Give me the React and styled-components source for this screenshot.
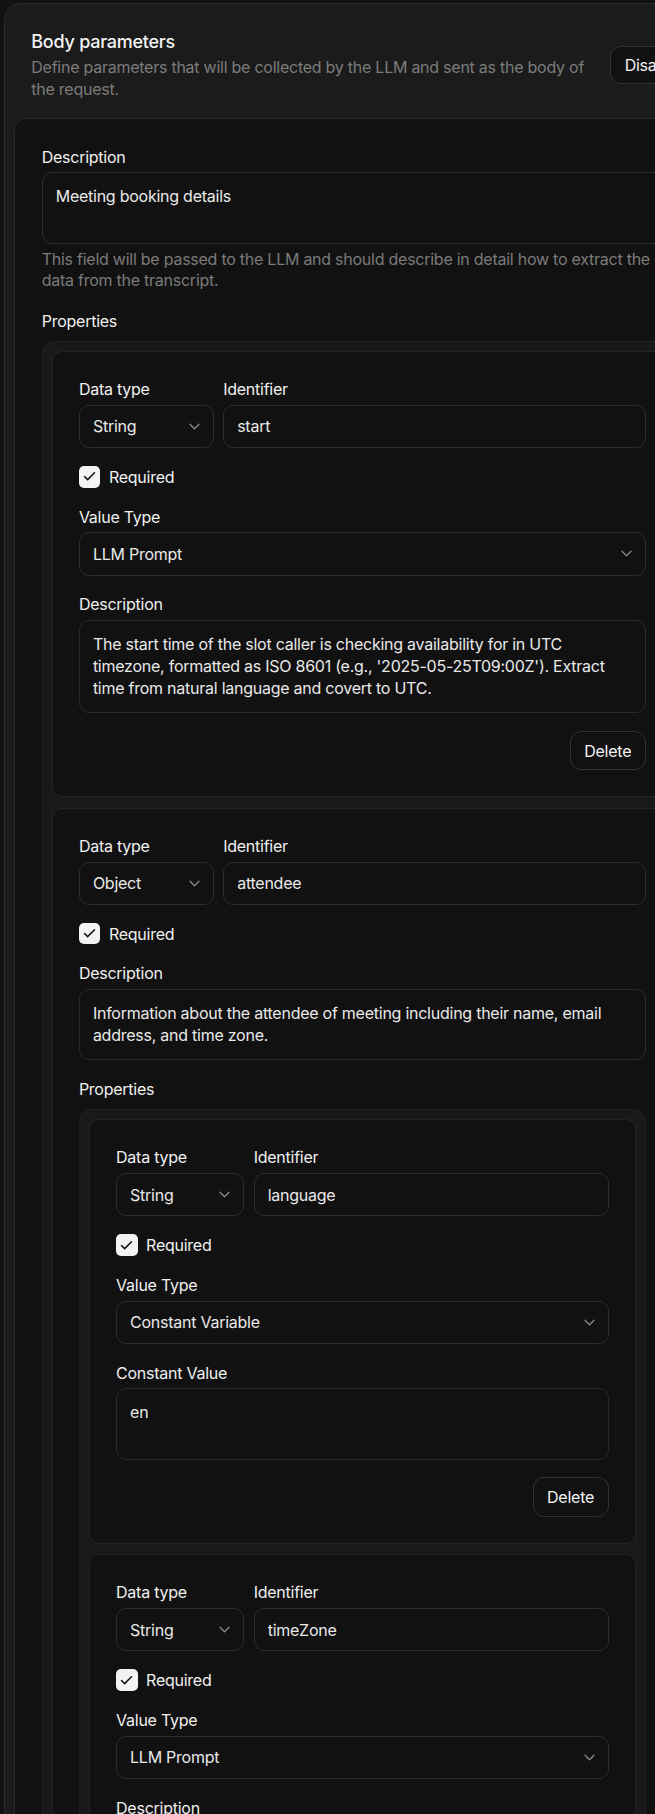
import styled, { createGlobalStyle } from 'styled-components';

const GlobalStyle = createGlobalStyle`
html, body {
  margin: 0;
  background: #121212;
  overflow: hidden;
}
body {
  font-family: Inter, "Liberation Sans", sans-serif;
  letter-spacing: -0.25px;
  color: #ededed;
  -webkit-font-smoothing: antialiased;
}
*{ box-sizing: border-box; }
`

const Page = styled.div`
padding: 3.3px 0 0 4.3px;
`

const Panel = styled.section`
width: 716px;
background: #1b1b1b;
border: 1px solid #2a2a2a;
border-radius: 16px;
padding: 0 9px 9px;
`

const Header = styled.header`
display: flex;
align-items: center;
gap: 16px;
padding: 25px 17px 18px 17px;
`

const HeaderText = styled.div`
flex: 1;
min-width: 0;
`

const Title = styled.h2`
margin: 0;
font-size: 18px;
line-height: 26px;
font-weight: 500;
color: #f3f3f3;
`

const Subtitle = styled.p`
margin: 1.5px 0 0;
font-size: 16px;
line-height: 21.7px;
color: #7b7b7b;
`

const OutlineButton = styled.button`
flex-shrink: 0;
height: ${({ $h }) => $h}px;
padding: 0 13.5px;
background: #111;
border: 1px solid #323232;
border-radius: 11px;
color: #f2f2f2;
font: inherit;
font-size: 16px;
font-weight: 400;
letter-spacing: inherit;
`

const InnerCard = styled.div`
background: #111;
border: 1px solid #282828;
border-radius: 12px;
padding: 26.4px;
display: flex;
flex-direction: column;
gap: 17.7px;
`

const Field = styled.div`
display: flex;
flex-direction: column;
gap: ${({ $gap }) => $gap || 4.8}px;
flex: ${({ $grow }) => $grow ? 1 : 'none'};
width: ${({ $w }) => $w ? `${$w}px` : 'auto'};
`

const Label = styled.label`
font-size: 16px;
line-height: 22px;
font-weight: 400;
color: #f0f0f0;
`

const TextArea = styled.textarea`
display: block;
width: 100%;
height: ${({ $rows }) => $rows * 21.7 + 28}px;
padding: 13px;
background: #111;
border: 1px solid #2a2a2a;
border-radius: 10px;
color: #e9e9e9;
font: inherit;
font-size: 16px;
line-height: 21.7px;
letter-spacing: inherit;
resize: none;
overflow: hidden;
outline: none;
`

const Help = styled.p`
margin: 0;
font-size: 16px;
line-height: 21.7px;
color: #7b7b7b;
`

const PropList = styled.div`
background: #191919;
border: 1px solid #1f1f1f;
border-radius: 12px;
padding: 9.2px;
display: flex;
flex-direction: column;
gap: 10.5px;
`

const ItemCard = styled.div`
background: #111;
border: 1px solid #242424;
border-radius: 10px;
padding: 26px;
display: flex;
flex-direction: column;
gap: 17.7px;
`

const TypeRow = styled.div`
display: flex;
gap: 9.3px;
`

const SelectBox = styled.button`
width: 100%;
height: 43.3px;
padding: 0 13px;
display: flex;
align-items: center;
justify-content: space-between;
background: #111;
border: 1px solid #2c2c2c;
border-radius: 10px;
color: #e9e9e9;
font: inherit;
font-size: 16px;
letter-spacing: inherit;
text-align: left;
`

const TextInput = styled.input`
width: 100%;
height: 43.3px;
padding: 0 13px;
background: #111;
border: 1px solid #2c2c2c;
border-radius: 10px;
color: #e9e9e9;
font: inherit;
font-size: 16px;
letter-spacing: inherit;
outline: none;
`

const CheckRow = styled.div`
display: flex;
align-items: center;
gap: 8.5px;
height: 22px;
`

const CheckBox = styled.span`
width: 21.5px;
height: 21.5px;
border-radius: 5px;
background: #f3f3f3;
display: grid;
place-items: center;
`

const Actions = styled.div`
display: flex;
justify-content: flex-end;
`

const Chevron = () => (
  <svg width="11" height="7" viewBox="0 0 11 7" fill="none">
    <path d="M1 1.2l4.5 4.5 4.5-4.5" stroke="#8a8a8a" strokeWidth="1.3" strokeLinecap="round" strokeLinejoin="round" />
  </svg>
)

const Check = () => (
  <svg width="15" height="15" viewBox="0 0 24 24" fill="none">
    <path d="M20 6 9 17l-5-5" stroke="#111" strokeWidth="2.4" strokeLinecap="round" strokeLinejoin="round" />
  </svg>
)

const schema = {
  description: 'Meeting booking details',
  properties: [
    {
      type: 'String', id: 'start', valueType: 'LLM Prompt', rows: 3,
      description: "The start time of the slot caller is checking availability for in UTC timezone, formatted as ISO 8601 (e.g., '2025-05-25T09:00Z'). Extract time from natural language and covert to UTC.",
    },
    {
      type: 'Object', id: 'attendee', rows: 2,
      description: 'Information about the attendee of meeting including their name, email address, and time zone.',
      properties: [
        { type: 'String', id: 'language', valueType: 'Constant Variable', constant: 'en' },
        {
          type: 'String', id: 'timeZone', valueType: 'LLM Prompt', rows: 2,
          description: "The attendee's time zone in IANA format (e.g., 'America/New_York').",
        },
      ],
    },
  ],
}

function PropertyItem({ item, depth }) {
  const isObject = item.type === 'Object';
  return (
    <ItemCard>
      <TypeRow>
        <Field $w={depth === 0 ? 135 : 128.3}>
          <Label>Data type</Label>
          <SelectBox type="button">{item.type}<Chevron /></SelectBox>
        </Field>
        <Field $grow>
          <Label>Identifier</Label>
          <TextInput defaultValue={item.id} />
        </Field>
      </TypeRow>

      <CheckRow>
        <CheckBox role="checkbox" aria-checked="true"><Check /></CheckBox>
        <Label>Required</Label>
      </CheckRow>

      {!isObject && (
        <Field>
          <Label>Value Type</Label>
          <SelectBox type="button">{item.valueType}<Chevron /></SelectBox>
        </Field>
      )}

      {item.constant !== undefined ? (
        <Field>
          <Label>Constant Value</Label>
          <TextArea $rows={2} defaultValue={item.constant} />
        </Field>
      ) : (
        <Field>
          <Label>Description</Label>
          <TextArea $rows={item.rows} defaultValue={item.description} />
        </Field>
      )}

      {isObject && (
        <Field $gap={9}>
          <Label>Properties</Label>
          <PropList>
            {item.properties.map(p => <PropertyItem key={p.id} item={p} depth={depth + 1} />)}
          </PropList>
        </Field>
      )}

      <Actions>
        <OutlineButton $h={39.4}>Delete</OutlineButton>
      </Actions>
    </ItemCard>
  );
}

export default function App() {
  return (
    <>
      <GlobalStyle />
      <Page>
        <Panel>
          <Header>
            <HeaderText>
              <Title>Body parameters</Title>
              <Subtitle>Define parameters that will be collected by the LLM and sent as the body of the request.</Subtitle>
            </HeaderText>
            <OutlineButton $h={37.6}>Disable</OutlineButton>
          </Header>

          <InnerCard>
            <Field $gap={4.8}>
              <Label>Description</Label>
              <TextArea $rows={2} defaultValue={schema.description} />
              <Help style={{ marginTop: 0.2 }}>This field will be passed to the LLM and should describe in detail how to extract the data from the transcript.</Help>
            </Field>

            <Field $gap={9}>
              <Label>Properties</Label>
              <PropList>
                {schema.properties.map(p => <PropertyItem key={p.id} item={p} depth={0} />)}
              </PropList>
            </Field>
          </InnerCard>
        </Panel>
      </Page>
    </>
  );
}
